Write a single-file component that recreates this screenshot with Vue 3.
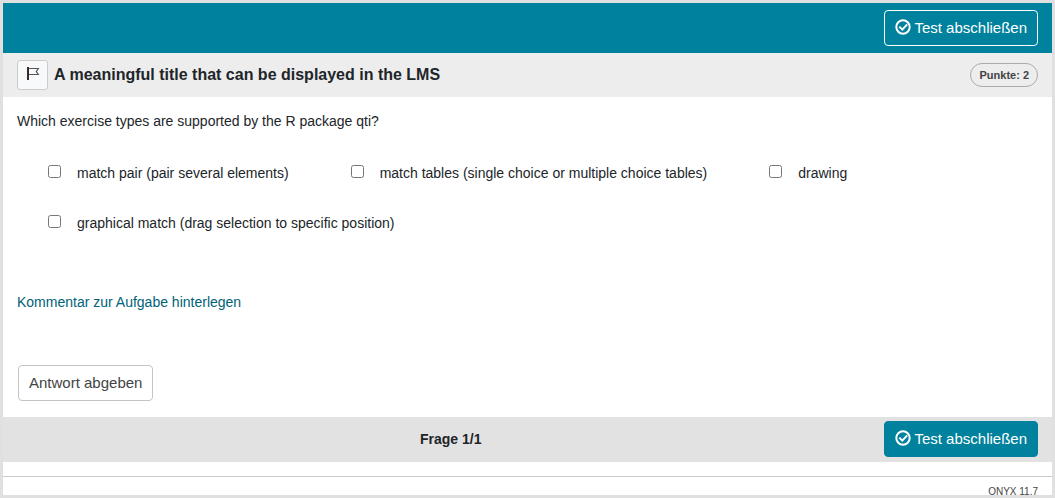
<script setup>
import { ref } from 'vue'

const options = [
  { id: 'pair', label: 'match pair (pair several elements)' },
  { id: 'tables', label: 'match tables (single choice or multiple choice tables)' },
  { id: 'drawing', label: 'drawing' },
  { id: 'graphical', label: 'graphical match (drag selection to specific position)' },
]
const selected = ref([])
</script>

<template>
  <div class="frame">
    <header class="topbar">
      <button type="button" class="btn btn-finish outlined">
        <svg class="check" viewBox="0 0 16 16" aria-hidden="true">
          <circle cx="8" cy="8" r="6.7" />
          <path d="M4.3 7.6l3 3 4.9-5.2" />
        </svg>
        <span>Test abschließen</span>
      </button>
    </header>

    <div class="titlebar">
      <button type="button" class="flag" aria-label="Markieren">
        <svg viewBox="0 0 14 14" aria-hidden="true">
          <path class="pole" d="M2 0v13" />
          <path class="cloth" d="M3 1.5h9.3L10.3 4.5l2 3H3" />
        </svg>
      </button>
      <h1>A meaningful title that can be displayed in the LMS</h1>
      <span class="points">Punkte: 2</span>
    </div>

    <main>
      <p class="question">Which exercise types are supported by the R package qti?</p>
      <div class="options">
        <label v-for="o in options" :key="o.id" class="option">
          <input v-model="selected" type="checkbox" :value="o.id" />
          <span>{{ o.label }}</span>
        </label>
      </div>
      <a class="comment" href="#">Kommentar zur Aufgabe hinterlegen</a>
      <button type="button" class="btn btn-submit">Antwort abgeben</button>
    </main>

    <div class="navbar">
      <strong class="progress">Frage 1/1</strong>
      <button type="button" class="btn btn-finish">
        <svg class="check" viewBox="0 0 16 16" aria-hidden="true">
          <circle cx="8" cy="8" r="6.7" />
          <path d="M4.3 7.6l3 3 4.9-5.2" />
        </svg>
        <span>Test abschließen</span>
      </button>
    </div>

    <footer>ONYX 11.7</footer>
  </div>
</template>

<style>
body {
  margin: 0;
}
</style>

<style scoped>
.frame {
  box-sizing: border-box;
  height: 100vh;
  overflow: hidden;
  border: 3px solid #e0e0e0;
  background: #fff;
  color: #212529;
  font-family: "Liberation Sans", Arial, sans-serif;
  font-size: 14px;
  line-height: 20px;
}

.topbar {
  display: flex;
  justify-content: flex-end;
  align-items: center;
  height: 50px;
  padding: 0 14px;
  background: #00819d;
}

.btn {
  box-sizing: border-box;
  display: inline-flex;
  align-items: center;
  height: 36px;
  padding: 0 10px;
  border: 1px solid #c4c4c4;
  border-radius: 4px;
  background: #fff;
  color: #444;
  font-family: inherit;
  font-size: 15px;
  line-height: 20px;
}

.btn-finish {
  gap: 3px;
  border-color: #00819d;
  background: #00819d;
  color: #fff;
}

.btn-finish.outlined {
  border-color: #fff;
}

.check {
  width: 16px;
  height: 16px;
  margin-bottom: 2px;
  fill: none;
  stroke: #fff;
  stroke-width: 2;
}

.titlebar {
  display: flex;
  align-items: center;
  height: 44px;
  padding: 0 14px;
  background: #ededed;
}

.flag {
  box-sizing: border-box;
  display: flex;
  justify-content: center;
  width: 31px;
  height: 30px;
  padding: 6px 0 0;
  border: 1px solid #ccc;
  border-radius: 3px;
  background: #f8f9fa;
}

.flag svg {
  width: 14px;
  height: 14px;
  fill: none;
}

.pole {
  stroke: #3c2a2a;
  stroke-width: 2;
}

.cloth {
  stroke: #555;
  stroke-width: 1.2;
}

h1 {
  flex: 1;
  margin: 0 0 0 6px;
  font-size: 16px;
  line-height: 20px;
}

.points {
  padding: 1px 8px;
  border: 1px solid #aaa;
  border-radius: 12px;
  color: #444;
  font-size: 11px;
  font-weight: bold;
  line-height: 20px;
}

main {
  display: flex;
  flex-direction: column;
  align-items: flex-start;
  padding: 14px 14px 16px;
}

.question {
  margin: 0;
}

.options {
  display: flex;
  flex-wrap: wrap;
  gap: 30px 62px;
  padding: 32px 31px 0;
}

.option {
  display: flex;
  align-items: flex-start;
  gap: 16px;
}

.option input {
  width: 13px;
  height: 13px;
  margin: 2px 0 0;
}

.comment {
  margin-top: 59px;
  color: #006278;
  text-decoration: none;
}

.btn-submit {
  margin: 53px 0 0 1px;
}

.navbar {
  box-sizing: border-box;
  display: grid;
  grid-template-columns: 1fr auto;
  align-items: center;
  padding: 4px 14px 5px;
  background: #e2e2e2;
}

.progress {
  text-align: center;
}

footer {
  margin-top: 14px;
  padding: 5px 14px;
  border-top: 1px solid #ccc;
  color: #444;
  font-size: 10px;
  text-align: right;
}
</style>
